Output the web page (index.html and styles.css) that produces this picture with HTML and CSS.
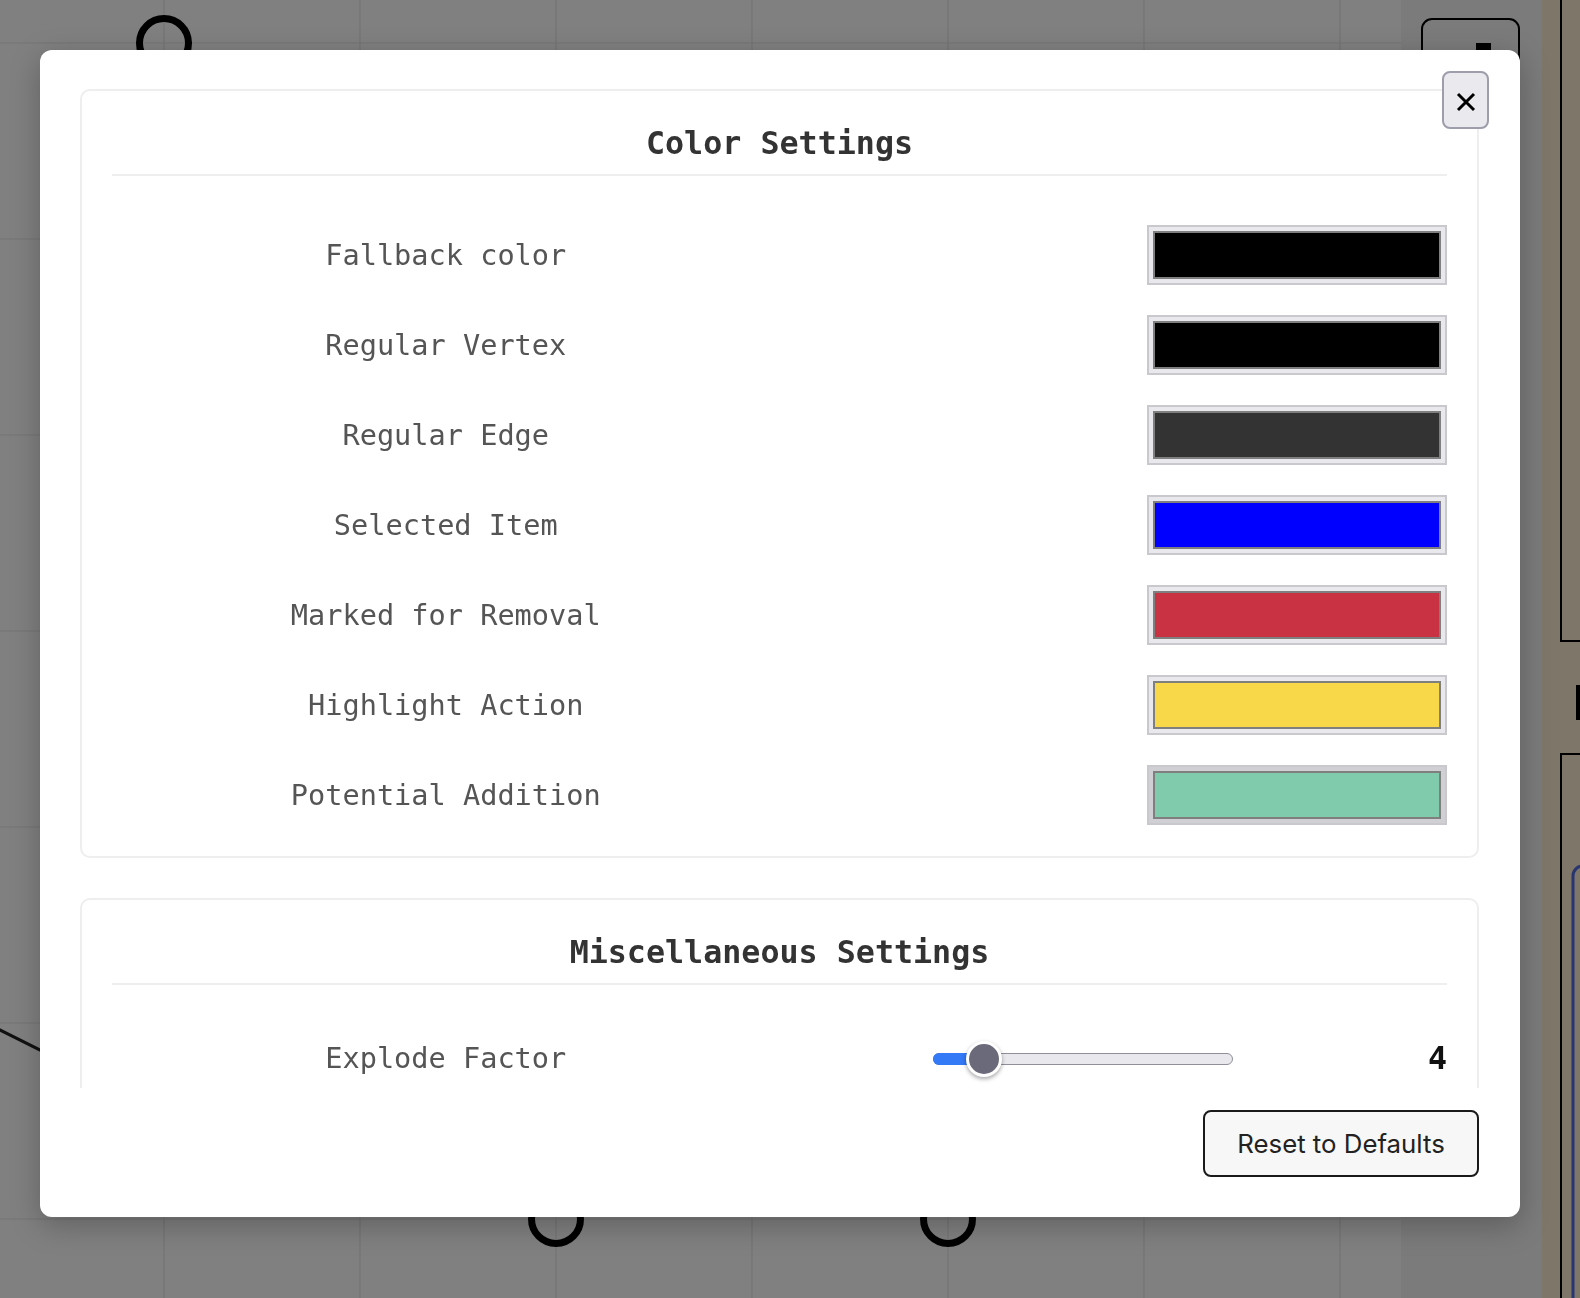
FILE: index.html
```html
<!DOCTYPE html>
<html lang="en">
<head>
<meta charset="utf-8">
<title>Settings</title>
<link rel="stylesheet" href="styles.css">
</head>
<body>
<div class="app">
  <svg class="canvas" width="1580" height="1298" viewBox="0 0 1580 1298" xmlns="http://www.w3.org/2000/svg">
    <rect x="0" y="0" width="1401" height="1298" fill="#808080"/>
    <g stroke="#747474" stroke-width="1.2">
      <line x1="164" y1="0" x2="164" y2="1298"/>
      <line x1="360" y1="0" x2="360" y2="1298"/>
      <line x1="556" y1="0" x2="556" y2="1298"/>
      <line x1="752" y1="0" x2="752" y2="1298"/>
      <line x1="948" y1="0" x2="948" y2="1298"/>
      <line x1="1144" y1="0" x2="1144" y2="1298"/>
      <line x1="1340" y1="0" x2="1340" y2="1298"/>
      <line x1="0" y1="43" x2="1401" y2="43"/>
      <line x1="0" y1="239" x2="1401" y2="239"/>
      <line x1="0" y1="435" x2="1401" y2="435"/>
      <line x1="0" y1="631" x2="1401" y2="631"/>
      <line x1="0" y1="827" x2="1401" y2="827"/>
      <line x1="0" y1="1023" x2="1401" y2="1023"/>
      <line x1="0" y1="1219" x2="1401" y2="1219"/>
    </g>
    <line x1="-100" y1="980" x2="300" y2="1180" stroke="#111" stroke-width="3"/>
    <g fill="none" stroke="#000" stroke-width="7">
      <circle cx="164" cy="43" r="24.5"/>
      <circle cx="556" cy="1219" r="24.5"/>
      <circle cx="948" cy="1219" r="24.5"/>
    </g>
    <rect x="1401" y="0" width="141" height="1298" fill="#7b7b7b"/>
    <rect x="1422" y="19" width="97" height="94" rx="10" fill="none" stroke="#000" stroke-width="2"/>
    <rect x="1476" y="43" width="15" height="8" fill="#000"/>
    <rect x="1542" y="0" width="38" height="1298" fill="#7e7668"/>
    <path d="M1561 0 V641 H1580" fill="none" stroke="#000" stroke-width="2"/>
    <rect x="1576" y="685" width="4" height="35" fill="#000"/>
    <path d="M1580 754 H1561 V1298" fill="none" stroke="#000" stroke-width="2"/>
    <rect x="1573" y="866" width="40" height="460" rx="10" fill="none" stroke="#283570" stroke-width="3"/>
  </svg>
</div>

<div class="backdrop">
  <div class="modal">
    <button class="close" aria-label="Close">
      <svg width="20" height="20" viewBox="0 0 20 20"><path d="M2 2 L18 18 M18 2 L2 18" stroke="#000" stroke-width="3" stroke-linecap="butt"/></svg>
    </button>
    <div class="modal-body">
      <section class="card">
        <h2 class="card-title">Color Settings</h2>
        <div class="rows">
          <div class="row"><span class="label">Fallback color</span><span class="control"><span class="swatch"><span class="swatch-fill c-black"></span></span></span></div>
          <div class="row"><span class="label">Regular Vertex</span><span class="control"><span class="swatch"><span class="swatch-fill c-black"></span></span></span></div>
          <div class="row"><span class="label">Regular Edge</span><span class="control"><span class="swatch"><span class="swatch-fill c-dark"></span></span></span></div>
          <div class="row"><span class="label">Selected Item</span><span class="control"><span class="swatch"><span class="swatch-fill c-blue"></span></span></span></div>
          <div class="row"><span class="label">Marked for Removal</span><span class="control"><span class="swatch"><span class="swatch-fill c-red"></span></span></span></div>
          <div class="row"><span class="label">Highlight Action</span><span class="control"><span class="swatch"><span class="swatch-fill c-yellow"></span></span></span></div>
          <div class="row"><span class="label">Potential Addition</span><span class="control"><span class="swatch hover"><span class="swatch-fill c-green"></span></span></span></div>
        </div>
      </section>
      <section class="card">
        <h2 class="card-title">Miscellaneous Settings</h2>
        <div class="rows rows-misc">
          <div class="row row-slider">
            <span class="label">Explode Factor</span>
            <span class="control">
              <span class="slider">
                <span class="slider-fill"></span>
                <span class="slider-thumb"></span>
              </span>
              <span class="value">4</span>
            </span>
          </div>
        </div>
      </section>
    </div>
    <div class="modal-footer">
      <button class="reset">Reset to Defaults</button>
    </div>
  </div>
</div>
</body>
</html>
```

FILE: styles.css
```css
html, body {
  margin: 0;
  padding: 0;
  width: 1580px;
  height: 1298px;
  overflow: hidden;
  background: #808080;
}

.app {
  position: relative;
  width: 1580px;
  height: 1298px;
}

.canvas {
  position: absolute;
  left: 0;
  top: 0;
  display: block;
}

.backdrop {
  position: fixed;
  inset: 0;
}

.modal {
  position: absolute;
  left: 40px;
  top: 50px;
  width: 1480px;
  height: 1167px;
  box-sizing: border-box;
  padding: 39px 41px 40px 40px;
  background: #fff;
  border-radius: 12px;
  box-shadow: 0 8px 30px rgba(0, 0, 0, 0.25);
  display: flex;
  flex-direction: column;
}

.close {
  position: absolute;
  top: 21px;
  right: 31px;
  width: 47px;
  height: 58px;
  box-sizing: border-box;
  padding: 3px 0 0 0;
  background: #e9e9ee;
  border: 2px solid #9d9dab;
  border-radius: 8px;
  display: flex;
  align-items: center;
  justify-content: center;
  z-index: 2;
}

.modal-body {
  flex: 1;
  overflow: hidden;
  display: flex;
  flex-direction: column;
  gap: 40px;
}

.card {
  flex: none;
  border: 2px solid #eeeeee;
  border-radius: 10px;
  padding: 30px 30px 31px 30px;
  font-family: "DejaVu Sans Mono", monospace;
}

.card-title {
  margin: 0;
  padding: 2px 0 11px 0;
  border-bottom: 2px solid #eeeeee;
  text-align: center;
  font-size: 31.7px;
  line-height: 40px;
  font-weight: bold;
  color: #333;
}

.rows {
  margin-top: 49px;
  display: flex;
  flex-direction: column;
  gap: 30px;
}

.rows-misc {
  margin-top: 50px;
}

.row {
  display: grid;
  grid-template-columns: 1fr 1fr;
  align-items: center;
}

.label {
  text-align: center;
  font-size: 28.6px;
  line-height: 46px;
  color: #555;
}

.control {
  display: flex;
  justify-content: flex-end;
  align-items: center;
}

.swatch {
  display: block;
  width: 300px;
  height: 60px;
  box-sizing: border-box;
  border: 2px solid #c9c9cd;
  background: #e9e9ed;
  padding: 4px;
}

.swatch.hover {
  background: #d0d0d4;
}

.swatch-fill {
  display: block;
  width: 100%;
  height: 100%;
  box-sizing: border-box;
  border: 2px solid #7f7f7f;
}

.c-black { background: #000000; }
.c-dark { background: #333333; }
.c-blue { background: #0000ff; }
.c-red { background: #c93242; }
.c-yellow { background: #f8d849; }
.c-green { background: #80cbab; }

.slider {
  position: relative;
  display: block;
  width: 300px;
  height: 12px;
  box-sizing: border-box;
  border: 1px solid #8f8f9a;
  border-radius: 6px;
  background: #e8e8ed;
  margin-top: 1px;
}

.slider-fill {
  position: absolute;
  left: -1px;
  top: -1px;
  width: 46px;
  height: 12px;
  border-radius: 6px;
  background: #3479f5;
}

.slider-thumb {
  position: absolute;
  left: 32px;
  top: -13px;
  width: 36px;
  height: 36px;
  box-sizing: border-box;
  border-radius: 50%;
  border: 3px solid #fff;
  background: #6b6a7a;
  box-shadow: 0 2px 4px rgba(0, 0, 0, 0.35);
}

.value {
  width: 214px;
  text-align: right;
  font-size: 31.7px;
  line-height: 46px;
  font-weight: bold;
  color: #111;
}

.modal-footer {
  margin-top: 22px;
  display: flex;
  justify-content: flex-end;
}

.reset {
  width: 276px;
  height: 67px;
  box-sizing: border-box;
  border: 2px solid #1a1a1a;
  border-radius: 8px;
  background: #f7f7f7;
  font-family: "Inter", "Noto Sans", sans-serif;
  font-size: 25.8px;
  color: #222;
  padding: 0;
}
```
